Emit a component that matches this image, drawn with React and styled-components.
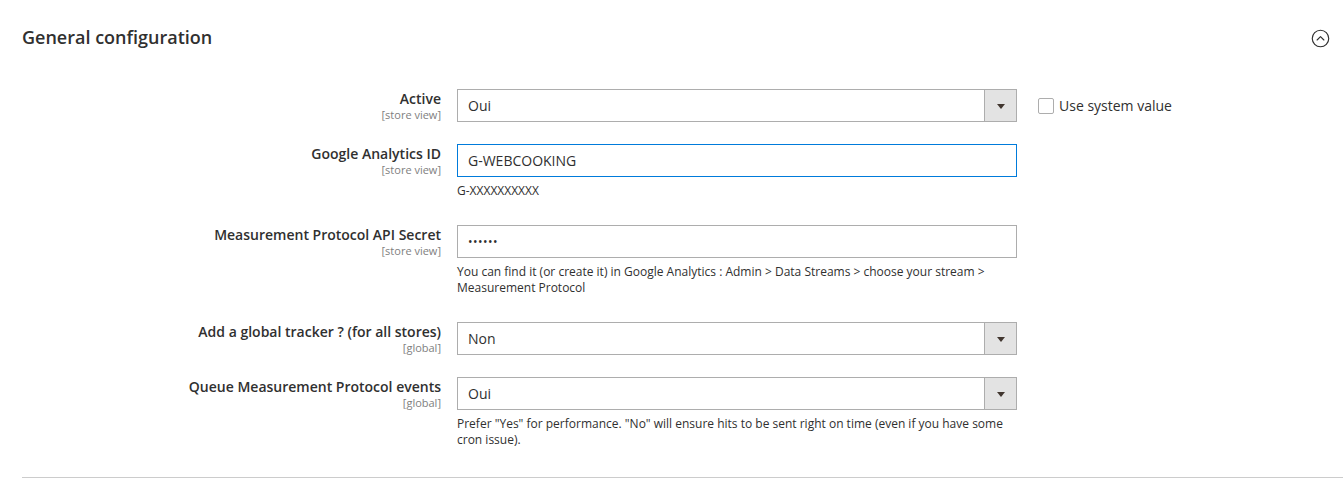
import React from "react";
import styled, { createGlobalStyle } from "styled-components";

const GlobalStyle = createGlobalStyle`
  html, body {
    margin: 0;
    padding: 0;
    background: #ffffff;
  }
  body {
    font-family: "Open Sans", "Noto Sans", "Liberation Sans", sans-serif;
    color: #303030;
  }
  * {
    box-sizing: border-box;
  }
`;

const fields = [
  {
    label: "Active",
    scope: "[store view]",
    type: "select",
    value: "Oui",
    systemValue: true,
  },
  {
    label: "Google Analytics ID",
    scope: "[store view]",
    type: "text",
    value: "G-WEBCOOKING",
    focused: true,
    note: "G-XXXXXXXXXX",
  },
  {
    label: "Measurement Protocol API Secret",
    scope: "[store view]",
    type: "text",
    value: "••••••",
    secret: true,
    note: "You can find it (or create it) in Google Analytics : Admin > Data Streams > choose your stream > Measurement Protocol",
  },
  {
    label: "Add a global tracker ? (for all stores)",
    scope: "[global]",
    type: "select",
    value: "Non",
  },
  {
    label: "Queue Measurement Protocol events",
    scope: "[global]",
    type: "select",
    value: "Oui",
    note: 'Prefer "Yes" for performance. "No" will ensure hits to be sent right on time (even if you have some cron issue).',
  },
];

const App = () => {
  return (
    <>
      <GlobalStyle />
      <Section>
        <Header>
          <Title>General configuration</Title>
          <CollapseIcon viewBox="0 0 18 18" aria-hidden="true">
            <circle cx="9" cy="9" r="7.8" fill="none" stroke="#303030" strokeWidth="1.1" />
            <path d="M5.8 10.4 L9 7.3 L12.2 10.4" fill="none" stroke="#303030" strokeWidth="1.1" strokeLinecap="round" strokeLinejoin="round" />
          </CollapseIcon>
        </Header>

        <Fields>
          {fields.map((f) => (
            <Row key={f.label}>
              <LabelCell>
                <Label>{f.label}</Label>
                <Scope>{f.scope}</Scope>
              </LabelCell>

              <Control>
                {f.type === "select" ? (
                  <Select>
                    <SelectValue>{f.value}</SelectValue>
                    <SelectArrow>
                      <Caret />
                    </SelectArrow>
                  </Select>
                ) : (
                  <TextInput $focused={f.focused} $secret={f.secret}>
                    {f.value}
                  </TextInput>
                )}
                {f.note && <Note>{f.note}</Note>}
              </Control>

              <Extra>
                {f.systemValue && (
                  <CheckLabel>
                    <Checkbox />
                    Use system value
                  </CheckLabel>
                )}
              </Extra>
            </Row>
          ))}
        </Fields>
      </Section>
    </>
  );
};

export default App;

/* ===== STYLES ===== */

const Section = styled.section`
  margin-left: 22px;
  margin-right: 1px;
  border-bottom: 1px solid #cccccc;
`;

const Header = styled.div`
  display: flex;
  align-items: center;
  justify-content: space-between;
  padding: 26px 13px 0 0;
  height: 48px;
  margin-bottom: 41px;
`;

const Title = styled.h2`
  margin: 0;
  font-size: 18px;
  line-height: 22px;
  font-weight: 600;
  color: #303030;
`;

const CollapseIcon = styled.svg`
  width: 19px;
  height: 19px;
  margin-top: 2px;
`;

const Fields = styled.div`
  display: flex;
  flex-direction: column;
  gap: 22px;
  padding-bottom: 25px;
`;

const Row = styled.div`
  display: grid;
  grid-template-columns: 419px 560px 1fr;
  column-gap: 16px;
  align-items: start;
`;

const LabelCell = styled.div`
  display: flex;
  flex-direction: column;
  align-items: flex-end;
  text-align: right;
  padding-top: 1px;
`;

const Label = styled.span`
  font-size: 14px;
  line-height: 18px;
  font-weight: 600;
  color: #303030;
`;

const Scope = styled.span`
  font-size: 11px;
  line-height: 13px;
  color: #808080;
`;

const Control = styled.div`
  display: flex;
  flex-direction: column;
`;

const fieldBox = `
  height: 33px;
  border: 1px solid #adadad;
  background: #ffffff;
  font-size: 14px;
  color: #303030;
  display: flex;
  align-items: center;
`;

const TextInput = styled.div`
  ${fieldBox}
  padding: 0 10px;
  border-color: ${(p) => (p.$focused ? "#007bdb" : "#adadad")};
  font-size: ${(p) => (p.$secret ? "12px" : "14px")};
  letter-spacing: ${(p) => (p.$secret ? "0.5px" : "0")};
`;

const Select = styled.div`
  ${fieldBox}
`;

const SelectValue = styled.span`
  flex: 1;
  padding: 0 10px;
`;

const SelectArrow = styled.span`
  width: 32px;
  height: 100%;
  background: #e3e3e3;
  border-left: 1px solid #adadad;
  display: flex;
  align-items: center;
  justify-content: center;
`;

const Caret = styled.span`
  width: 0;
  height: 0;
  border-left: 4px solid transparent;
  border-right: 4px solid transparent;
  border-top: 5px solid #41362f;
  margin-top: 1px;
`;

const Note = styled.div`
  margin: 6px 0 4px;
  font-size: 12px;
  line-height: 16px;
  color: #303030;
`;

const Extra = styled.div`
  padding: 9px 0 0 5px;
`;

const CheckLabel = styled.label`
  display: flex;
  align-items: center;
  gap: 5px;
  font-size: 14px;
  line-height: 16px;
  color: #303030;
`;

const Checkbox = styled.span`
  width: 16px;
  height: 16px;
  border: 1px solid #adadad;
  border-radius: 2px;
  background: #ffffff;
`;
